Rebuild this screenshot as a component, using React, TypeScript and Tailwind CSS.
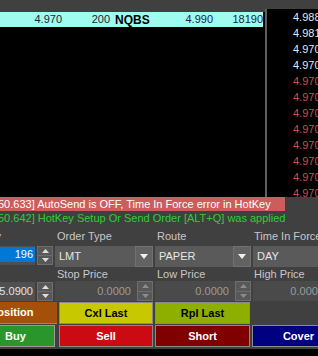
import React from "react";

const ladder = [
  { p: "4.988", red: false },
  { p: "4.981", red: false },
  { p: "4.970", red: false },
  { p: "4.970", red: false },
  { p: "4.970", red: true },
  { p: "4.970", red: true },
  { p: "4.970", red: true },
  { p: "4.970", red: true },
  { p: "4.970", red: true },
  { p: "4.970", red: true },
  { p: "4.970", red: true },
  { p: "4.970", red: true },
];

function Spinner({ dim }: { dim?: boolean }) {
  const c = dim ? "#8c8c8c" : "#dedede";
  return (
    <div className="flex h-full w-[16px] shrink-0 flex-col border border-[#6e6e6e] bg-[#585858]">
      <div className="flex flex-1 items-center justify-center border-b border-[#6e6e6e]">
        <svg width="7" height="4" viewBox="0 0 7 4">
          <path d="M0 4 L3.5 0 L7 4Z" fill={c} />
        </svg>
      </div>
      <div className="flex flex-1 items-center justify-center">
        <svg width="7" height="4" viewBox="0 0 7 4">
          <path d="M0 0 L7 0 L3.5 4Z" fill={c} />
        </svg>
      </div>
    </div>
  );
}

function Combo({ value, width }: { value: string; width: string }) {
  return (
    <div className={`flex h-full shrink-0 items-center bg-[#5a5a5a] ${width}`}>
      <span className="flex-1 pl-[4px] text-[#e6e6e6]">{value}</span>
      <div className="flex h-full w-[18px] items-center justify-center border border-[#707070] bg-[#626262]">
        <svg width="8" height="5" viewBox="0 0 8 5">
          <path d="M0 0 L8 0 L4 5Z" fill="#f0f0f0" />
        </svg>
      </div>
    </div>
  );
}

function PriceField({ value, width }: { value: string; width: string }) {
  return (
    <div className={`flex h-full shrink-0 items-center bg-[#4a4a4a] ${width}`}>
      <span className="flex-1 pr-[6px] text-right text-[#9a9a9a]">{value}</span>
      <Spinner dim />
    </div>
  );
}

export default function App() {
  return (
    <div className="h-[356px] w-[318px] overflow-hidden bg-[#404040] font-['Liberation_Sans',Arial,sans-serif] text-[11px] leading-none">
      <div className="h-[9px]" />

      {/* quotes + ladder */}
      <div className="flex h-[188px]">
        <div className="w-[265px] shrink-0 border-t-[3px] border-[#404040] bg-black">
          <div className="flex h-[15px] w-[263px] items-center whitespace-nowrap bg-[#9ffcef] text-[#1c2536]">
            <span className="w-[62px] text-right">4.970</span>
            <span className="w-[48px] text-right">200</span>
            <span className="ml-[5px] w-[35px] text-[12px] font-bold text-black">NQBS</span>
            <span className="w-[63px] text-right">4.990</span>
            <span className="w-[50px] text-right">18190</span>
          </div>
        </div>
        <div className="w-[2px] shrink-0 bg-[#5e5e5e]" />
        <div className="flex-1 overflow-hidden bg-black pl-[26px]">
          {ladder.map((r, i) => (
            <div
              key={i}
              className={`flex h-[16px] items-center whitespace-nowrap ${r.red ? "text-[#cf4b4b]" : "text-[#dde8f8]"}`}
            >
              {r.p}
            </div>
          ))}
        </div>
      </div>

      {/* log */}
      <div className="w-[285px] overflow-hidden whitespace-nowrap">
        <div className="flex h-[14px] items-center bg-[#cd5c5c] text-white">
          <span className="-ml-[2px]">50.633] AutoSend is OFF, Time In Force error in HotKey</span>
        </div>
        <div className="flex h-[15px] items-center text-[#32cd32]">
          <span className="-ml-[2px]">50.642] HotKey Setup Or Send Order [ALT+Q] was applied</span>
        </div>
      </div>

      {/* order form */}
      <div className="flex h-[20px] items-center whitespace-nowrap text-[#c8c8c8]">
        <div className="w-[55px] shrink-0 overflow-hidden">
          <span className="-ml-[40px] inline-block">Quantity</span>
        </div>
        <div className="w-[98px] shrink-0 pl-[2px]">Order Type</div>
        <div className="ml-[2px] w-[96px] shrink-0 pl-[2px]">Route</div>
        <div className="ml-[2px] w-[93px] shrink-0 pl-[1px]">Time In Force</div>
      </div>

      <div className="flex h-[21px] whitespace-nowrap">
        <div className="flex w-[55px] shrink-0 items-start gap-[2px]">
          <div className="h-[19px] w-[35px] bg-[#505050]">
            <div className="mt-[1px] flex h-[15px] items-center justify-end bg-[#0078d7] pr-[2px] text-white">196</div>
          </div>
          <div className="h-[19px]">
            <Spinner />
          </div>
        </div>
        <Combo value="LMT" width="w-[98px]" />
        <div className="w-[2px] shrink-0" />
        <Combo value="PAPER" width="w-[96px]" />
        <div className="w-[2px] shrink-0" />
        <Combo value="DAY" width="w-[93px]" />
      </div>

      <div className="flex h-[14px] items-center whitespace-nowrap text-[#c8c8c8]">
        <div className="w-[55px] shrink-0" />
        <div className="w-[98px] shrink-0 pl-[2px]">Stop Price</div>
        <div className="ml-[2px] w-[96px] shrink-0 pl-[2px]">Low Price</div>
        <div className="ml-[2px] w-[93px] shrink-0 pl-[1px]">High Price</div>
      </div>

      <div className="flex h-[20px] whitespace-nowrap">
        <div className="flex w-[55px] shrink-0 gap-[2px] pt-[1px]">
          <div className="flex h-[19px] w-[35px] items-center justify-end overflow-hidden bg-[#505050] pr-[2px] text-[#e4e4e4]">
            5.0900
          </div>
          <div className="h-[19px]">
            <Spinner />
          </div>
        </div>
        <PriceField value="0.0000" width="w-[98px]" />
        <div className="w-[2px] shrink-0" />
        <PriceField value="0.0000" width="w-[96px]" />
        <div className="w-[2px] shrink-0" />
        <PriceField value="0.0000" width="w-[93px]" />
      </div>

      <div className="h-[1px]" />

      {/* buttons */}
      <div className="flex flex-col gap-[1px] whitespace-nowrap text-[11px] font-bold">
        <div className="flex h-[22px] gap-[2px]">
          <div className="flex w-[57px] shrink-0 items-center overflow-hidden border-b border-[#8a8a8a] bg-[#a5500a] text-white">
            <span className="-ml-[10px]">Position</span>
          </div>
          <div className="flex w-[94px] shrink-0 items-center justify-center border border-[#8a8a8a] bg-[#c8c800] text-black">
            Cxl Last
          </div>
          <div className="flex w-[95px] shrink-0 items-center justify-center border border-[#8a8a8a] bg-[#8eae00] text-black">
            Rpl Last
          </div>
        </div>
        <div className="flex h-[22px] gap-[2px]">
          <div className="mr-[2px] flex w-[55px] shrink-0 items-center border border-l-0 border-[#9a9a9a] bg-[#28962a] pl-[5px] text-white">
            Buy
          </div>
          <div className="flex w-[94px] shrink-0 items-center justify-center border border-[#8a8a8a] bg-[#cc0a14] text-white">
            Sell
          </div>
          <div className="flex w-[95px] shrink-0 items-center justify-center border border-[#8a8a8a] bg-[#800000] text-white">
            Short
          </div>
          <div className="flex w-[93px] shrink-0 items-center justify-center border border-[#8a8a8a] bg-[#000080] text-white">
            Cover
          </div>
        </div>
      </div>

      <div className="h-[2px]" />
      <div className="h-[7px] bg-black" />
    </div>
  );
}
